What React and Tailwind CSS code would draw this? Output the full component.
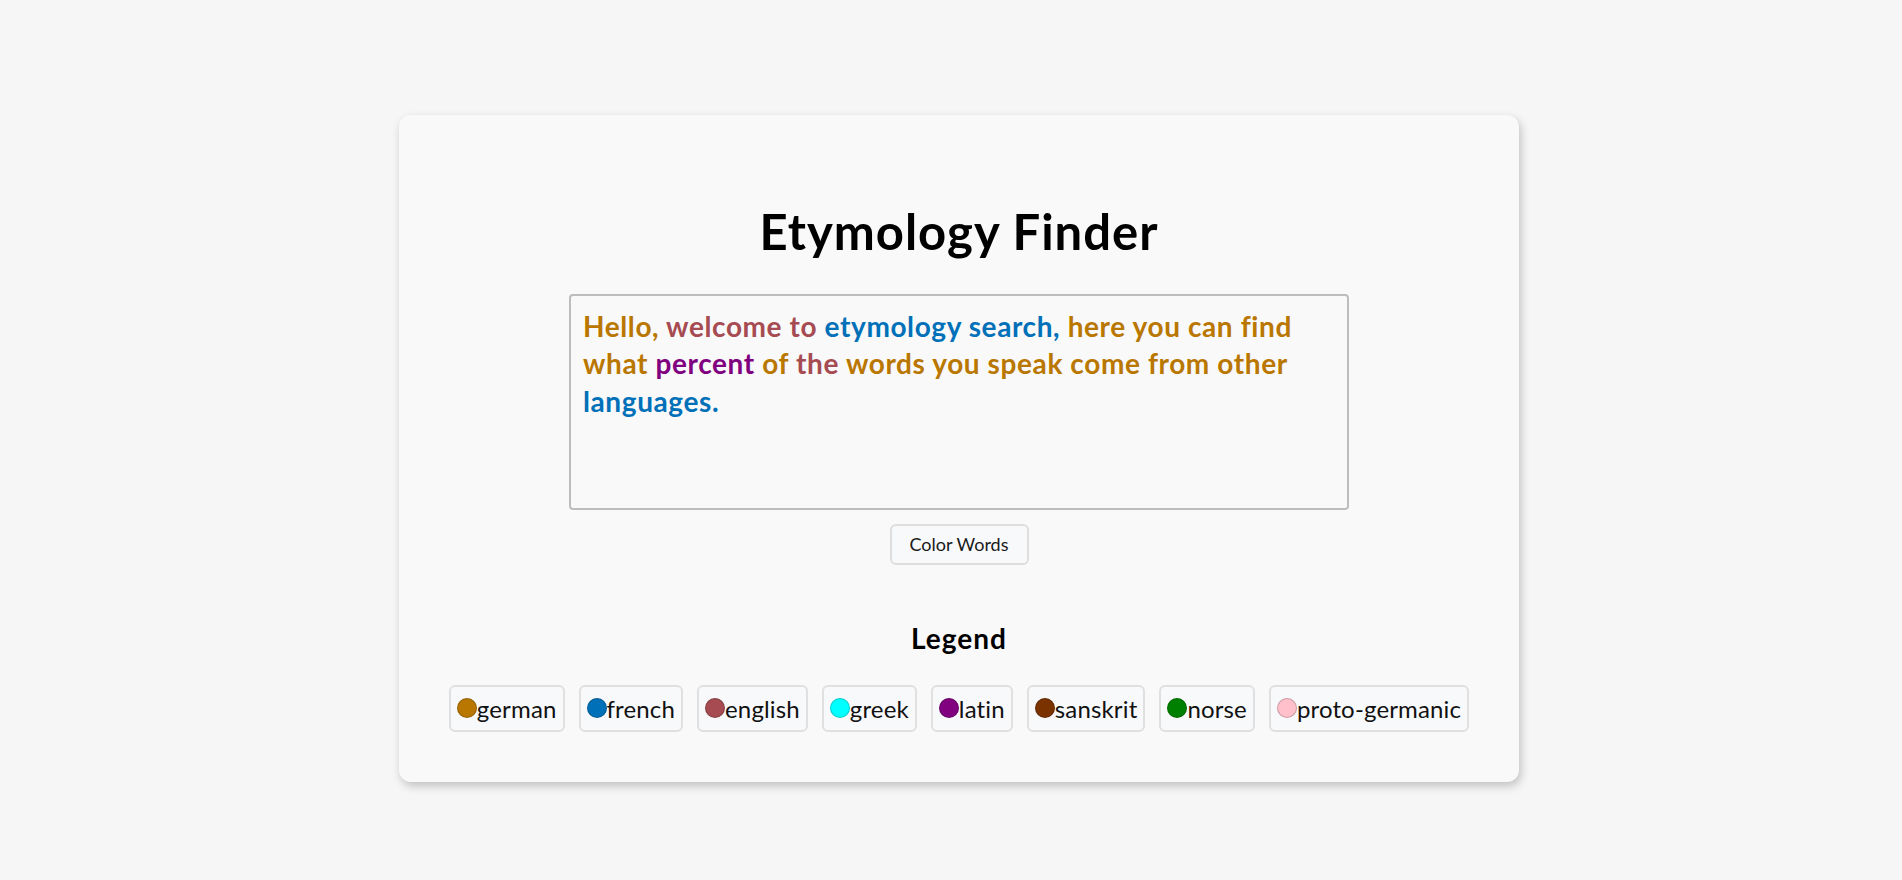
import React from "react";

const LANGS = [
  { name: "german", color: "#b97700" },
  { name: "french", color: "#0070b8" },
  { name: "english", color: "#a64b52" },
  { name: "greek", color: "#00ffff" },
  { name: "latin", color: "#800080" },
  { name: "sanskrit", color: "#7a3300" },
  { name: "norse", color: "#008000" },
  { name: "proto-germanic", color: "#ffc0cb" },
];

const C = {
  german: "text-[#b97700]",
  english: "text-[#a64b52]",
  french: "text-[#0070b8]",
  latin: "text-[#800080]",
};

const WORDS = [
  ["Hello,", "german"],
  ["welcome", "english"],
  ["to", "english"],
  ["etymology", "french"],
  ["search,", "french"],
  ["here", "german"],
  ["you", "german"],
  ["can", "german"],
  ["find", "german"],
  ["what", "german"],
  ["percent", "latin"],
  ["of", "german"],
  ["the", "english"],
  ["words", "german"],
  ["you", "german"],
  ["speak", "german"],
  ["come", "german"],
  ["from", "german"],
  ["other", "german"],
  ["languages.", "french"],
];

function Legend() {
  return (
    <div className="flex gap-[14px]">
      {LANGS.map((l) => (
        <div
          key={l.name}
          className="flex items-center border-2 border-[#e0e0e0] rounded-[6px] bg-[#f8f9fb] px-[6px] py-[6px] text-[24px] leading-[31px] tracking-[0.15px] text-[#111]"
        >
          <span
            className="w-5 h-5 rounded-full border border-black/20 shrink-0"
            style={{ backgroundColor: l.color }}
          />
          <span>{l.name}</span>
        </div>
      ))}
    </div>
  );
}

export default function App() {
  return (
    <div
      className="min-h-screen bg-[#f6f6f6] flex items-center justify-center pt-4 pl-4"
      style={{ fontFamily: "Lato, 'Liberation Sans', sans-serif" }}
    >
      <div className="w-[1120px] h-[667px] bg-[#f9f9f9] rounded-[12px] shadow-[2px_4px_10px_rgba(0,0,0,0.22)] flex flex-col items-center pt-[84px]">
        <h1 className="text-[49px] leading-[64px] font-bold tracking-[1px] text-black">Etymology Finder</h1>
        <div className="mt-[31px] w-[780px] h-[216px] border-2 border-[#bdbdbd] rounded-[4px] p-3 text-[28px] leading-[37.5px] tracking-[0.6px] font-bold">
          {WORDS.map(([w, lang], i) => (
            <React.Fragment key={i}>
              <span className={C[lang]}>{w}</span>
              {i < WORDS.length - 1 ? " " : null}
            </React.Fragment>
          ))}
        </div>
        <button className="mt-[14px] w-[139px] h-[41px] border-2 border-[#dedede] rounded-[6px] bg-[#f8f9fb] text-[18px] text-[#1a1a1a]">
          Color Words
        </button>
        <h3 className="mt-[55px] text-[28px] leading-[37px] font-bold tracking-[1px] text-black">Legend</h3>
        <div className="mt-[28px]">
          <Legend />
        </div>
      </div>
    </div>
  );
}
